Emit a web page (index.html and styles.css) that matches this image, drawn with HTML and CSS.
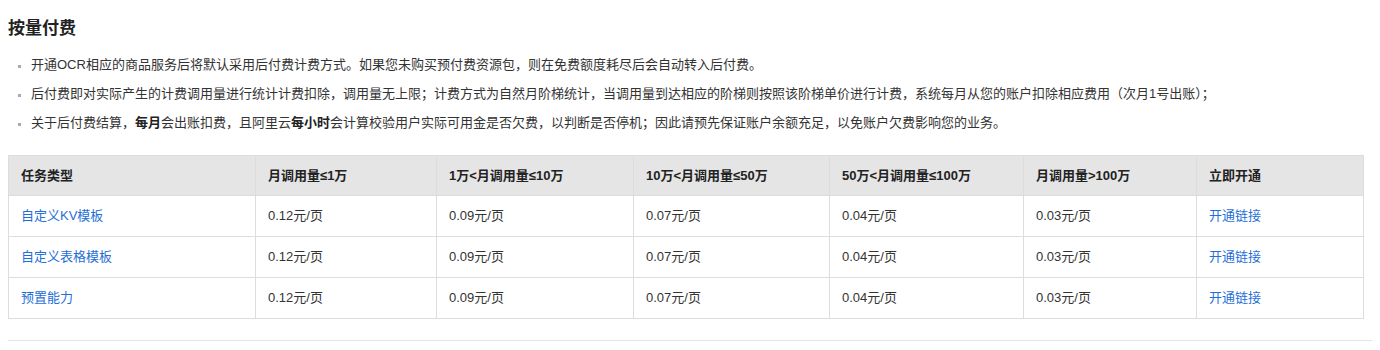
FILE: index.html
```html
<!DOCTYPE html>
<html lang="zh-CN">
<head>
<meta charset="utf-8">
<title>按量付费</title>
<link rel="stylesheet" href="styles.css">
</head>
<body>
<h2 class="title">按量付费</h2>
<ul class="notes">
  <li>开通OCR相应的商品服务后将默认采用后付费计费方式。如果您未购买预付费资源包，则在免费额度耗尽后会自动转入后付费。</li>
  <li>后付费即对实际产生的计费调用量进行统计计费扣除，调用量无上限；计费方式为自然月阶梯统计，当调用量到达相应的阶梯则按照该阶梯单价进行计费，系统每月从您的账户扣除相应费用（次月1号出账）；</li>
  <li>关于后付费结算，<b>每月</b>会出账扣费，且阿里云<b>每小时</b>会计算校验用户实际可用金是否欠费，以判断是否停机；因此请预先保证账户余额充足，以免账户欠费影响您的业务。</li>
</ul>
<table class="price">
  <colgroup>
    <col class="c1"><col class="c2"><col class="c3"><col class="c4"><col class="c5"><col class="c6"><col class="c7">
  </colgroup>
  <thead>
    <tr>
      <th>任务类型</th>
      <th>月调用量≤1万</th>
      <th>1万&lt;月调用量≤10万</th>
      <th>10万&lt;月调用量≤50万</th>
      <th>50万&lt;月调用量≤100万</th>
      <th>月调用量&gt;100万</th>
      <th>立即开通</th>
    </tr>
  </thead>
  <tbody>
    <tr>
      <td><a href="#">自定义KV模板</a></td>
      <td>0.12元/页</td><td>0.09元/页</td><td>0.07元/页</td><td>0.04元/页</td><td>0.03元/页</td>
      <td><a href="#">开通链接</a></td>
    </tr>
    <tr>
      <td><a href="#">自定义表格模板</a></td>
      <td>0.12元/页</td><td>0.09元/页</td><td>0.07元/页</td><td>0.04元/页</td><td>0.03元/页</td>
      <td><a href="#">开通链接</a></td>
    </tr>
    <tr>
      <td><a href="#">预置能力</a></td>
      <td>0.12元/页</td><td>0.09元/页</td><td>0.07元/页</td><td>0.04元/页</td><td>0.03元/页</td>
      <td><a href="#">开通链接</a></td>
    </tr>
  </tbody>
</table>
<hr class="rule">
</body>
</html>
```
FILE: styles.css
```css
body {
  margin: 8px;
  font-family: "Liberation Sans", "Noto Sans CJK SC", sans-serif;
  font-size: 13px;
  color: #333;
  background: #fff;
}
.title {
  margin: 9px 0 0;
  font-size: 17px;
  line-height: 24px;
  font-weight: bold;
  color: #222;
}
.notes {
  list-style: none;
  margin: 9px 0 0;
  padding: 0;
}
.notes li {
  position: relative;
  line-height: 29px;
  padding-left: 23px;
}
.notes li::before {
  content: "";
  position: absolute;
  left: 10px;
  top: 15px;
  width: 3px;
  height: 3px;
  background: #aaa;
}
.notes b {
  font-weight: bold;
  color: #222;
}
.price {
  margin-top: 18px;
  border-collapse: collapse;
  width: 1355px;
  table-layout: fixed;
}
.price .c1 { width: 247px; }
.price .c2 { width: 181px; }
.price .c3 { width: 197px; }
.price .c4 { width: 196px; }
.price .c5 { width: 194px; }
.price .c6 { width: 173px; }
.price .c7 { width: 167px; }
.price th,
.price td {
  border: 1px solid #ddd;
  padding: 10px 12px;
  line-height: 20px;
  text-align: left;
  white-space: nowrap;
}
.price th {
  line-height: 19px;
  background: #e5e5e5;
  font-weight: bold;
  color: #222;
}
.price a {
  color: #1f6fd8;
  text-decoration: none;
}
.rule {
  margin: 21px 0 0;
  border: 0;
  border-top: 1px solid #e5e5e5;
}
```
